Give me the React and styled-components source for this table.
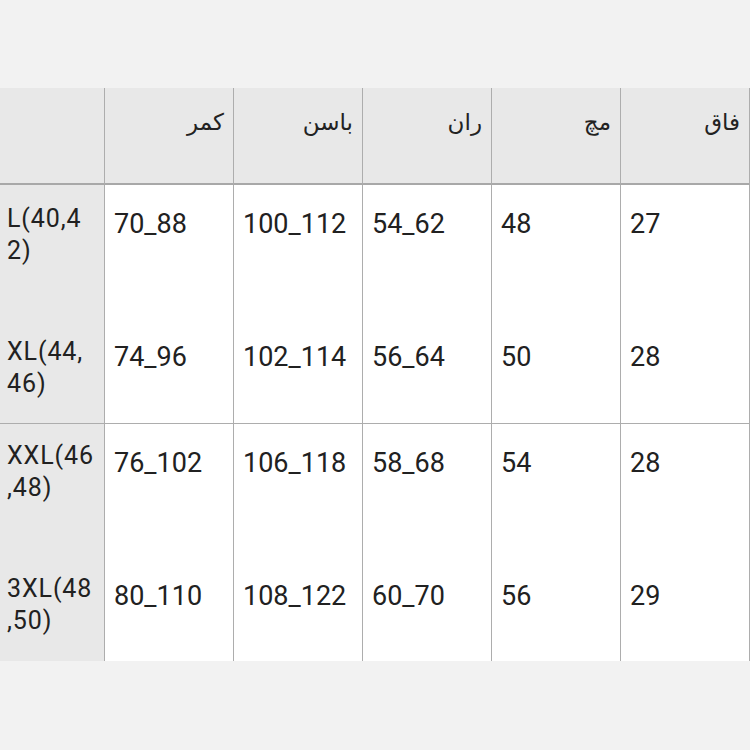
import React from "react";
import styled, { createGlobalStyle } from "styled-components";

const Global = createGlobalStyle`
  html, body { margin: 0; padding: 0; background: #f2f2f2; }
  body { font-family: Roboto, "Noto Sans", sans-serif; color: #212121; }
`;

const Page = styled.div`
  width: 750px;
  height: 750px;
  padding-top: 88px;
  box-sizing: border-box;
  background: #f2f2f2;
  overflow: hidden;
`;

const Table = styled.div`
  display: grid;
  grid-template-columns: 104px 129px 129px 129px 129px 130px;
  grid-template-rows: 97px 239px 237px;
`;

const borderColor = "#adadad";

const Cell = styled.div`
  box-sizing: border-box;
  border-left: ${(p) => (p.$first ? "none" : `1px solid ${borderColor}`)};
  border-right: ${(p) => (p.$last ? `1px solid ${borderColor}` : "none")};
  border-bottom: ${(p) => (p.$bottom ? `1px solid ${borderColor}` : "none")};
`;

const HeaderCell = styled(Cell)`
  background: #e8e8e8;
  direction: rtl;
  text-align: right;
  padding: 16px 9px 0 0;
  font-family: "DejaVu Sans", sans-serif;
  font-size: 23px;
  line-height: 36px;
  color: #222;
  border-bottom: 2px solid #a8a8a8;
`;

const SizeCell = styled(Cell)`
  background: #e8e8e8;
  padding: ${(p) => p.$top}px 0 0 7px;
  font-size: 25px;
  line-height: 32px;
  letter-spacing: 0.9px;
`;

const DataCell = styled(Cell)`
  background: #ffffff;
  padding: ${(p) => p.$top}px 0 0 9px;
  font-size: 27px;
  line-height: 32px;
`;

const Entry = styled.div`
  height: 133px;
`;

const Line = styled.div`
  white-space: nowrap;
`;

const headers = ["کمر", "باسن", "ران", "مچ", "فاق"];

const rows = [
  {
    sizes: [["L(40,4", "2)"], ["XL(44,", "46)"]],
    data: [
      ["70_88", "74_96"],
      ["100_112", "102_114"],
      ["54_62", "56_64"],
      ["48", "50"],
      ["27", "28"],
    ],
  },
  {
    sizes: [["XXL(46", ",48)"], ["3XL(48", ",50)"]],
    data: [
      ["76_102", "80_110"],
      ["106_118", "108_122"],
      ["58_68", "60_70"],
      ["54", "56"],
      ["28", "29"],
    ],
  },
];

export default function App() {
  return (
    <>
      <Global />
      <Page>
        <Table>
          <HeaderCell $first />
          {headers.map((h, i) => (
            <HeaderCell key={h} $last={i === headers.length - 1}>
              {h}
            </HeaderCell>
          ))}
          {rows.map((row, ri) => {
            const bottom = ri === 0;
            return (
              <React.Fragment key={ri}>
                <SizeCell $first $bottom={bottom} $top={ri === 0 ? 18 : 16}>
                  {row.sizes.map((s, si) => (
                    <Entry key={si}>
                      {s.map((l, li) => (
                        <Line key={li}>{l}</Line>
                      ))}
                    </Entry>
                  ))}
                </SizeCell>
                {row.data.map((d, di) => (
                  <DataCell
                    key={di}
                    $bottom={bottom}
                    $last={di === row.data.length - 1}
                    $top={23}
                  >
                    {d.map((v, vi) => (
                      <Entry key={vi}>{v}</Entry>
                    ))}
                  </DataCell>
                ))}
              </React.Fragment>
            );
          })}
        </Table>
      </Page>
    </>
  );
}
